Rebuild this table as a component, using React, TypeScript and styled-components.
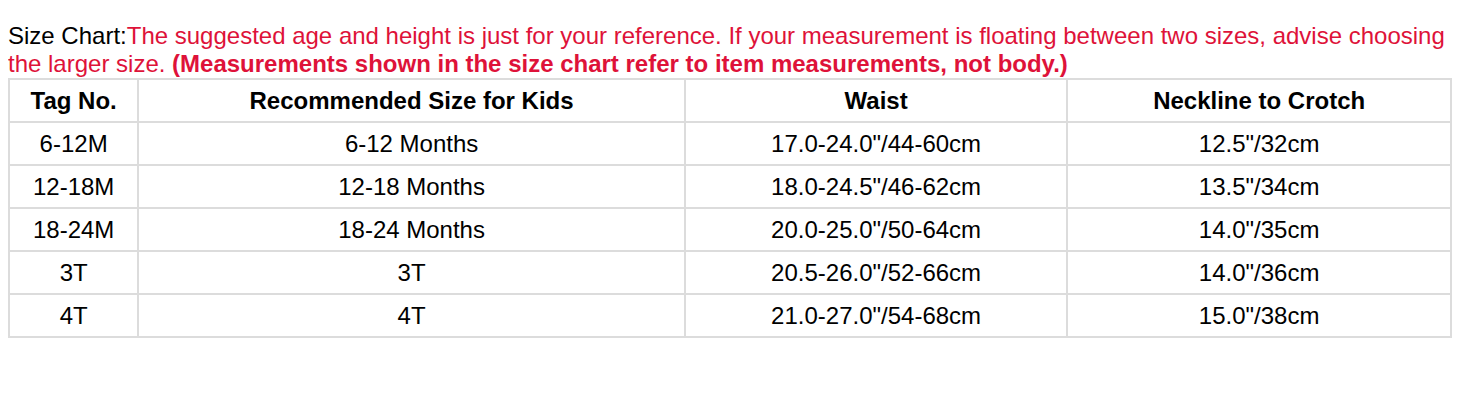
import React from "react";
import styled, { createGlobalStyle } from "styled-components";

const GlobalStyle = createGlobalStyle`
  body {
    margin: 8px;
    background: #fff;
    font-family: "Liberation Sans", Arial, sans-serif;
    color: #000;
  }
`;

const Wrapper = styled.div`
  padding-top: 14px;
`;

const Intro = styled.p`
  margin: 0;
  font-size: 24px;
  line-height: 28px;
`;

const Red = styled.span<{ $bold?: boolean }>`
  color: #de1239;
  font-weight: ${(p) => (p.$bold ? 700 : 400)};
`;

const Table = styled.table`
  width: 1444px;
  border-collapse: collapse;
`;

const Th = styled.th<{ $w: number }>`
  width: ${(p) => p.$w}px;
  height: 41px;
  border: 2px solid #dcdcdc;
  font-size: 24px;
  line-height: 28px;
  font-weight: 700;
  text-align: center;
  padding: 0;
`;

const Td = styled.td`
  height: 41px;
  border: 2px solid #dcdcdc;
  font-size: 24px;
  line-height: 28px;
  text-align: center;
  padding: 0;
`;

const headers = [
  { label: "Tag No.", w: 128 },
  { label: "Recommended Size for Kids", w: 548 },
  { label: "Waist", w: 383 },
  { label: "Neckline to Crotch", w: 384 },
];

const rows = [
  ["6-12M", "6-12 Months", "17.0-24.0\"/44-60cm", "12.5\"/32cm"],
  ["12-18M", "12-18 Months", "18.0-24.5\"/46-62cm", "13.5\"/34cm"],
  ["18-24M", "18-24 Months", "20.0-25.0\"/50-64cm", "14.0\"/35cm"],
  ["3T", "3T", "20.5-26.0\"/52-66cm", "14.0\"/36cm"],
  ["4T", "4T", "21.0-27.0\"/54-68cm", "15.0\"/38cm"],
];

const App = () => {
  return (
    <Wrapper>
      <GlobalStyle />
      <Intro>
        Size Chart:
        <Red>
          The suggested age and height is just for your reference. If your
          measurement is floating between two sizes, advise choosing the larger
          size.{" "}
        </Red>
        <Red $bold>
          (Measurements shown in the size chart refer to item measurements, not
          body.)
        </Red>
      </Intro>
      <Table>
        <thead>
          <tr>
            {headers.map((h) => (
              <Th key={h.label} $w={h.w}>
                {h.label}
              </Th>
            ))}
          </tr>
        </thead>
        <tbody>
          {rows.map((r) => (
            <tr key={r[0]}>
              {r.map((c, i) => (
                <Td key={i}>{c}</Td>
              ))}
            </tr>
          ))}
        </tbody>
      </Table>
    </Wrapper>
  );
};

export default App;
